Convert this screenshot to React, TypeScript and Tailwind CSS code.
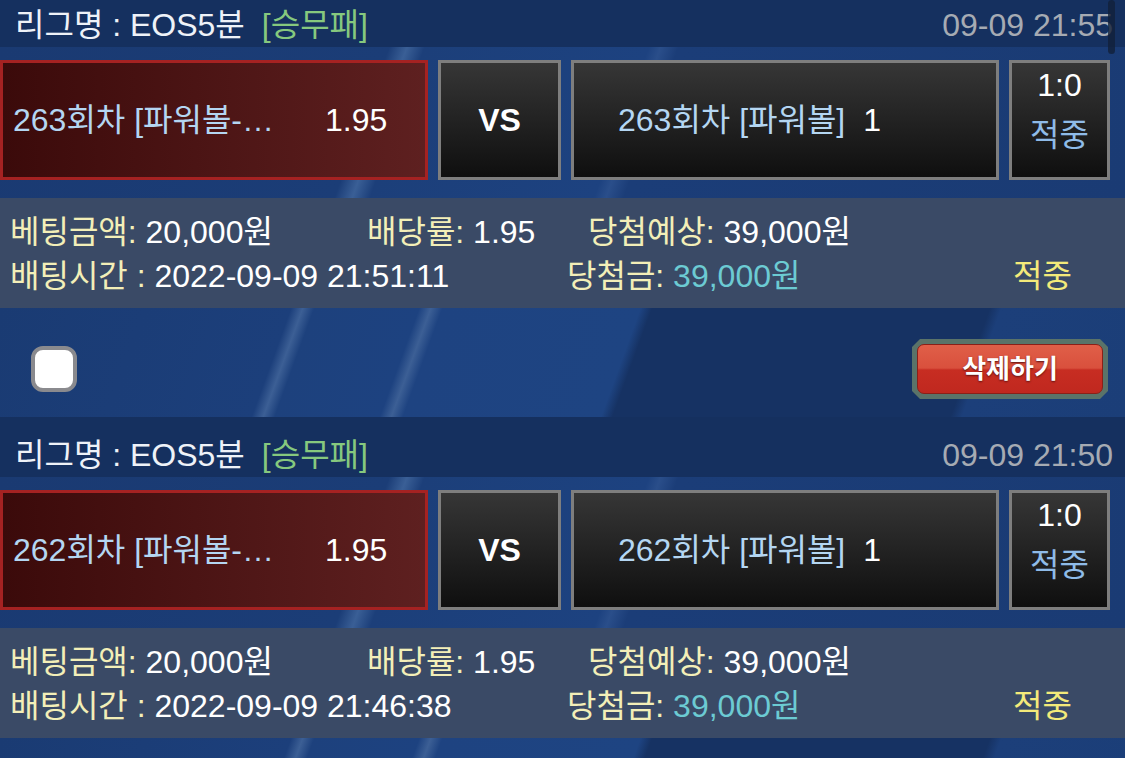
import React from 'react';

interface Bet {
  round: number;
  time: string;
  placed: string;
}

const bets: Bet[] = [
  { round: 263, time: '09-09 21:55', placed: '2022-09-09 21:51:11' },
  { round: 262, time: '09-09 21:50', placed: '2022-09-09 21:46:38' },
];

const BetSection: React.FC<{ bet: Bet }> = ({ bet }) => {
  return (
    <div>
      {/* League header */}
      <div className="h-[60px] bg-[#15305f] flex items-center justify-between pt-4 pl-[15px] pr-[12px] text-[32px] leading-none">
        <div className="flex items-center text-[#eef2f8]">
          <span>리그명 : EOS5분</span>
          <span className="ml-[17px] text-[#86c87e]">[승무패]</span>
        </div>
        <span className="text-[#a6abb3]">{bet.time}</span>
      </div>

      {/* Match row */}
      <div className="flex pt-[13px] pb-[18px] bg-[linear-gradient(110deg,#1a3a72_0%,#1b3d77_33%,#3a5f96_34.5%,#1c3f7a_36%,#1d4280_55%,#2a4e8a_56%,#1b3d78_57.5%,#1a3b74_100%)]">
        <div className="w-[428px] h-[120px] border-[3px] border-[#a52222] bg-[linear-gradient(90deg,#3b0a0a,#5e2020)] flex items-center pl-[10px] text-[32px]">
          <span className="w-[312px] text-[#b4d6f2] whitespace-nowrap">{bet.round}회차 [파워볼-…</span>
          <span className="text-white">1.95</span>
        </div>
        <div className="ml-[10px] w-[123px] h-[120px] border-[3px] border-[#7e7e7e] bg-[linear-gradient(180deg,#363636,#0f0f0f)] flex items-center justify-center text-white font-bold text-[32px]">
          VS
        </div>
        <div className="ml-[10px] w-[428px] h-[120px] border-[3px] border-[#7e7e7e] bg-[linear-gradient(180deg,#363636,#0f0f0f)] flex items-center pl-[44px] text-[32px] whitespace-nowrap">
          <span className="text-[#b4d6f2]">{bet.round}회차 [파워볼]</span>
          <span className="ml-[18px] text-white">1</span>
        </div>
        <div className="ml-[10px] w-[101px] h-[120px] border-[3px] border-[#7e7e7e] bg-[linear-gradient(180deg,#363636,#0f0f0f)] flex flex-col items-center pt-[6px] gap-[18px] text-[32px] leading-none">
          <span className="text-white">1:0</span>
          <span className="text-[#8fbbe8]">적중</span>
        </div>
      </div>

      {/* Bet info */}
      <div className="h-[110px] bg-[#3a4a66] pt-[12px] text-[32px] leading-[44px] whitespace-nowrap">
        <div className="flex">
          <div className="w-[367px] pl-[10px]">
            <span className="text-[#f3efb8]">베팅금액:</span> <span className="text-white">20,000원</span>
          </div>
          <div className="w-[221px]">
            <span className="text-[#f3efb8]">배당률:</span> <span className="text-white">1.95</span>
          </div>
          <div>
            <span className="text-[#f3efb8]">당첨예상:</span> <span className="text-white">39,000원</span>
          </div>
        </div>
        <div className="flex">
          <div className="w-[567px] pl-[10px]">
            <span className="text-[#f3efb8]">배팅시간 :</span> <span className="text-white">{bet.placed}</span>
          </div>
          <div className="w-[446px]">
            <span className="text-[#f3efb8]">당첨금:</span> <span className="text-[#6ccbd3]">39,000원</span>
          </div>
          <span className="text-[#f4ea7a]">적중</span>
        </div>
      </div>

      {/* Actions */}
      <div className="h-[109px] pt-[13px] flex items-center justify-between pl-[31px] pr-[17px] bg-[linear-gradient(110deg,#1a3b73_0%,#1c3f7b_25%,#3c5f95_26%,#1d417d_27%,#1d4280_36%,#3c5f95_37%,#1e4381_38%,#1e4482_55%,#163263_56%,#163263_85%,#1c3f7a_86%,#1b3e78_100%)]">
        <div className="w-[46px] h-[46px] rounded-[12px] border-4 border-[#8a8a8e] bg-white" />
        <button className="w-[196px] h-[60px] bg-[#5a7369] p-[5px] [clip-path:polygon(8px_0,calc(100%-8px)_0,100%_8px,100%_calc(100%-8px),calc(100%-8px)_100%,8px_100%,0_calc(100%-8px),0_8px)]">
          <div className="w-full h-full rounded-[7px] border border-[#8a2018] bg-[linear-gradient(180deg,#e05f48_0%,#d9503d_48%,#c72d22_52%,#c0281f_100%)] flex items-center justify-center text-white font-bold text-[26px] [text-shadow:0_1px_2px_#5a1010]">
            삭제하기
          </div>
        </button>
      </div>
    </div>
  );
};

const App: React.FC = () => {
  return (
    <div
      className="relative w-[1125px] h-[758px] overflow-hidden bg-[#1b3e78]"
      style={{ fontFamily: '"Liberation Sans", "Noto Sans CJK KR", sans-serif' }}
    >
      <div className="-mt-[13px]">
        {bets.map((bet) => (
          <BetSection key={bet.round} bet={bet} />
        ))}
      </div>
      {/* scrollbar thumb */}
      <div className="absolute top-0 right-[10px] w-[7px] h-[54px] rounded-full bg-[#12203a]/80" />
    </div>
  );
};

export default App;
